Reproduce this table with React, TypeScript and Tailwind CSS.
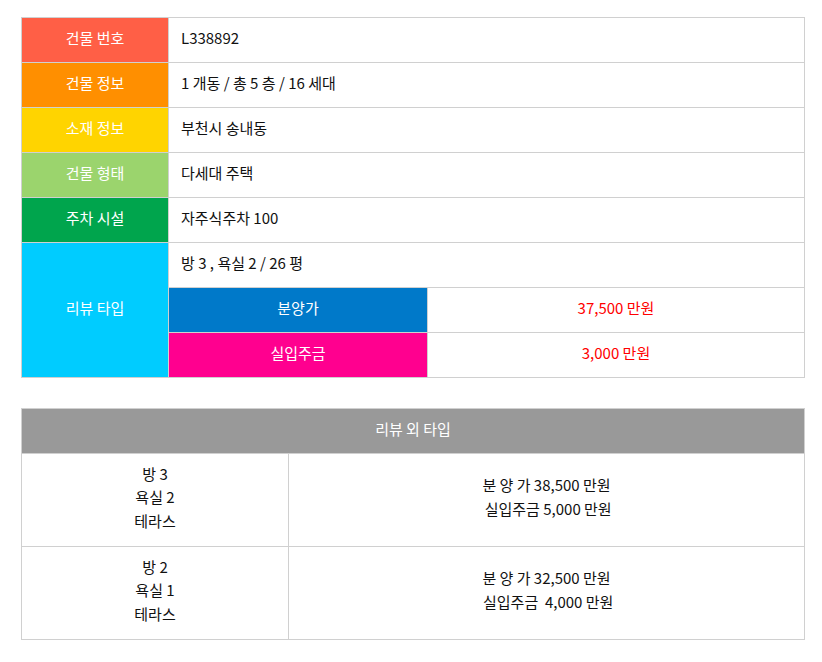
const labelCls = 'w-[147px] border border-[#d0d0d0] pb-1 text-center text-white';
const valueCls = 'border border-[#d0d0d0] pb-1 pl-3 text-left text-[#111]';

const rows = [
  { label: '건물 번호', bg: 'bg-[#ff5f46]', value: 'L338892' },
  { label: '건물 정보', bg: 'bg-[#ff8f00]', value: '1 개동 / 총 5 층 / 16 세대' },
  { label: '소재 정보', bg: 'bg-[#ffd400]', value: '부천시 송내동' },
  { label: '건물 형태', bg: 'bg-[#9bd46d]', value: '다세대 주택' },
  { label: '주차 시설', bg: 'bg-[#00a54d]', value: '자주식주차 100' },
];

const otherTypes = [
  { room: ['방 3', '욕실 2', '테라스'], price: ['분 양 가 38,500 만원', ' 실입주금 5,000 만원'] },
  { room: ['방 2', '욕실 1', '테라스'], price: ['분 양 가 32,500 만원', ' 실입주금  4,000 만원'] },
];

export default function App() {
  return (
    <div
      className="min-h-[662px] bg-white px-[21px] pt-[17px] text-[15px]"
      style={{ fontFamily: '"Noto Sans CJK KR", "Noto Sans", sans-serif' }}
    >
      {/* Review type info */}
      <table className="w-[784px] table-fixed border-collapse">
        <colgroup>
          <col className="w-[147px]" />
          <col className="w-[259px]" />
          <col />
        </colgroup>
        <tbody>
          {rows.map((r) => (
            <tr key={r.label} className="h-[45px]">
              <td className={`${labelCls} ${r.bg}`}>{r.label}</td>
              <td colSpan={2} className={valueCls}>
                {r.value}
              </td>
            </tr>
          ))}
          <tr className="h-[45px]">
            <td rowSpan={3} className={`${labelCls} bg-[#00ccff]`}>
              리뷰 타입
            </td>
            <td colSpan={2} className={valueCls}>
              방 3 , 욕실 2 / 26 평
            </td>
          </tr>
          <tr className="h-[45px]">
            <td className="border border-[#d0d0d0] bg-[#0079c9] pb-1 text-center text-white">분양가</td>
            <td className="border border-[#d0d0d0] pb-1 text-center text-[#ff0000]">37,500 만원</td>
          </tr>
          <tr className="h-[45px]">
            <td className="border border-[#d0d0d0] bg-[#ff008f] pb-1 text-center text-white">실입주금</td>
            <td className="border border-[#d0d0d0] pb-1 text-center text-[#ff0000]">3,000 만원</td>
          </tr>
        </tbody>
      </table>

      {/* Other types */}
      <table className="mt-[30px] w-[784px] table-fixed border-collapse">
        <colgroup>
          <col className="w-[267px]" />
          <col />
        </colgroup>
        <thead>
          <tr className="h-[45px]">
            <th colSpan={2} className="border border-[#d0d0d0] bg-[#999999] pb-1 text-center font-normal text-white">
              리뷰 외 타입
            </th>
          </tr>
        </thead>
        <tbody>
          {otherTypes.map((t, i) => (
            <tr key={i} className="h-[93px]">
              <td className="border border-[#d0d0d0] pb-[6px] text-center leading-[23.5px] text-[#111]">
                {t.room.map((l) => (
                  <div key={l}>{l}</div>
                ))}
              </td>
              <td className="border border-[#d0d0d0] pb-[6px] text-center leading-6 text-[#111]">
                {t.price.map((l) => (
                  <div key={l} className="whitespace-pre">
                    {l}
                  </div>
                ))}
              </td>
            </tr>
          ))}
        </tbody>
      </table>
    </div>
  );
}
